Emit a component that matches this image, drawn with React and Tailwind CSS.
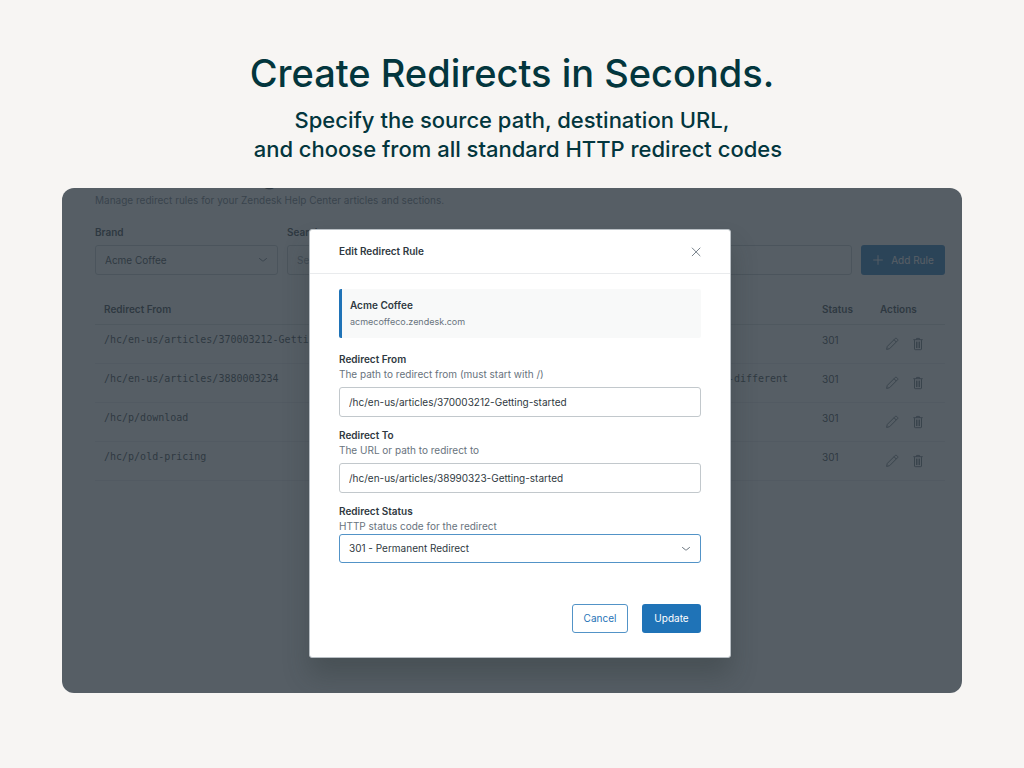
import { useState } from 'react'

const rules = [
  { from: '/hc/en-us/articles/370003212-Getting-started', to: '/hc/en-us/articles/38990323-Getting-started', status: 301 },
  { from: '/hc/en-us/articles/3880003234', to: '/hc/en-us/articles/3880003234-something-very-different', status: 301 },
  { from: '/hc/p/download', to: '/hc/p/downloads', status: 301 },
  { from: '/hc/p/old-pricing', to: '/hc/p/pricing', status: 301 },
]

function ChevronIcon({ className }) {
  return (
    <svg viewBox="0 0 12 12" className={className} fill="none" stroke="currentColor" strokeLinecap="round" aria-hidden="true">
      <path d="M2.5 4.5l2.9 2.3a1 1 0 0 0 1.2 0l2.9-2.3" />
    </svg>
  )
}

function PlusIcon() {
  return (
    <svg viewBox="0 0 12 12" className="size-3" fill="none" stroke="currentColor" strokeWidth="0.9" strokeLinecap="round" aria-hidden="true">
      <path d="M6 1.6v8.8M1.6 6h8.8" />
    </svg>
  )
}

function CloseIcon() {
  return (
    <svg viewBox="0 0 12 12" className="size-3" fill="none" stroke="currentColor" strokeWidth="0.9" strokeLinecap="round" aria-hidden="true">
      <path d="M2.2 2l7.800 7.800M10 2L2.200 9.800" />
    </svg>
  )
}

function PencilIcon() {
  return (
    <svg viewBox="0 0 14 14" className="size-3.5" fill="none" stroke="currentColor" strokeLinejoin="round" aria-hidden="true">
      <path d="M1.6 12.4l.7-3L10.400 1.300a.8.8 0 0 1 1.100 0l1.200 1.200a.8.8 0 0 1 0 1.100L4.600 11.700z" />
      <path d="M9 2.700l2.300 2.300" />
    </svg>
  )
}

function TrashIcon() {
  return (
    <svg viewBox="0 0 14 14" className="size-3.5" fill="none" stroke="currentColor" strokeLinecap="round" aria-hidden="true">
      <path d="M3.500 3.500v8.500a.7.7 0 0 0 .7.7h5.600a.7.7 0 0 0 .7-.7V3.500M2.700 2.700h8.600M5.500 2.500V1.400h3v1.100" />
      <path d="M5.500 5v5.700M7 5v5.700M8.500 5v5.700" />
    </svg>
  )
}

function RulesPage() {
  return (
    <div className="col-start-1 row-start-1 min-w-0 bg-white pr-[17px] pl-[33px] text-[10px] text-[#2f3941]">
      <h2 className="-mt-[27px] text-[24px] leading-[30px] font-semibold">Redirect Manager</h2>
      <p className="mt-[2px] leading-[14px] text-[#68737d]">
        Manage redirect rules for your Zendesk Help Center articles and sections.
      </p>

      <div className="mt-[18px] flex items-end gap-[9px]">
        <div className="w-[183px]">
          <label htmlFor="brand" className="block leading-[14px] font-semibold">Brand</label>
          <div className="relative mt-[6px]">
            <select id="brand" className="block h-[30px] w-full appearance-none rounded-[3px] border border-[#c2c8cc] px-[9px]">
              <option>Acme Coffee</option>
            </select>
            <ChevronIcon className="pointer-events-none absolute top-[9px] right-[9px] size-3 text-[#68737d]" />
          </div>
        </div>
        <div className="flex-1">
          <label htmlFor="search" className="block leading-[14px] font-semibold">Search</label>
          <input
            id="search"
            type="text"
            placeholder="Search redirects"
            className="mt-[6px] block h-[30px] w-full rounded-[3px] border border-[#c2c8cc] px-[9px] placeholder:text-[#87929d]"
          />
        </div>
        <button type="button" className="flex h-[30px] w-[84px] items-center justify-center gap-[7px] rounded-[3px] bg-[#1f73b7] text-white">
          <PlusIcon />
          Add Rule
        </button>
      </div>

      <table className="mt-5 w-full table-fixed text-left">
        <thead>
          <tr className="h-[29px] border-b border-[#d8dcde]">
            <th className="px-[9px] font-semibold">Redirect From</th>
            <th className="px-[9px] font-semibold">Redirect To</th>
            <th className="w-[58px] px-[9px] font-semibold">Status</th>
            <th className="w-[74px] px-[9px] font-semibold">Actions</th>
          </tr>
        </thead>
        <tbody>
          {rules.map((rule) => (
            <tr key={rule.from} className="h-[39px] border-b border-[#e9ebed] align-top">
              <td className="truncate px-[9px] pt-[7px] font-['DejaVu_Sans_Mono',monospace] leading-4">{rule.from}</td>
              <td className="truncate px-[9px] pt-[7px] font-['DejaVu_Sans_Mono',monospace] leading-4">{rule.to}</td>
              <td className="px-[9px] pt-[7px] leading-4">{rule.status}</td>
              <td className="px-[14px] pt-3">
                <div className="flex gap-3 text-[#68737d]">
                  <button type="button" aria-label="Edit rule"><PencilIcon /></button>
                  <button type="button" aria-label="Delete rule"><TrashIcon /></button>
                </div>
              </td>
            </tr>
          ))}
        </tbody>
      </table>
    </div>
  )
}

function Field({ id, label, hint, children }) {
  return (
    <div>
      <label htmlFor={id} className="block leading-[15px] font-semibold">{label}</label>
      <p id={`${id}-hint`} className="leading-[15px] text-[#68737d]">{hint}</p>
      {children}
    </div>
  )
}

function EditRuleModal() {
  const [from, setFrom] = useState('/hc/en-us/articles/370003212-Getting-started')
  const [to, setTo] = useState('/hc/en-us/articles/38990323-Getting-started')
  const [status, setStatus] = useState('301')

  return (
    <div
      role="dialog"
      aria-labelledby="modal-title"
      className="w-full max-w-[422px] rounded-[3px] border border-[#b9bfc4] bg-white text-[10px] text-[#2f3941] shadow-[0_18px_26px_rgba(40,50,50,0.3)]"
    >
      <div className="flex h-11 items-center justify-between border-b border-[#e9ebed] px-[29px]">
        <h2 id="modal-title" className="font-semibold">Edit Redirect Rule</h2>
        <button type="button" aria-label="Close" className="-mr-px text-[#68737d]">
          <CloseIcon />
        </button>
      </div>

      <form className="px-[29px] pt-[15px] pb-6" onSubmit={(e) => e.preventDefault()}>
        <div className="h-[49px] rounded-[2px] border-l-[3px] border-[#1f73b7] bg-[#f8f9f9] px-2 pt-2">
          <p className="leading-4 font-semibold">Acme Coffee</p>
          <p className="text-[9px] leading-[18px] text-[#68737d]">acmecoffeco.zendesk.com</p>
        </div>

        <div className="mt-[14px] flex flex-col gap-[11px]">
          <Field id="from" label="Redirect From" hint="The path to redirect from (must start with /)">
            <input
              id="from"
              type="text"
              aria-describedby="from-hint"
              value={from}
              onChange={(e) => setFrom(e.target.value)}
              className="mt-[5px] block h-[30px] w-full rounded-[3px] border border-[#c2c8cc] px-[9px]"
            />
          </Field>
          <Field id="to" label="Redirect To" hint="The URL or path to redirect to">
            <input
              id="to"
              type="text"
              aria-describedby="to-hint"
              value={to}
              onChange={(e) => setTo(e.target.value)}
              className="mt-[5px] block h-[30px] w-full rounded-[3px] border border-[#c2c8cc] px-[9px]"
            />
          </Field>
          <Field id="status" label="Redirect Status" hint="HTTP status code for the redirect">
            <div className="relative">
              <select
                id="status"
                aria-describedby="status-hint"
                value={status}
                onChange={(e) => setStatus(e.target.value)}
                className="block h-[29px] w-full appearance-none rounded-[3px] border border-[#5293c7] px-[9px]"
              >
                <option value="301">301 - Permanent Redirect</option>
                <option value="302">302 - Found</option>
                <option value="307">307 - Temporary Redirect</option>
              </select>
              <ChevronIcon className="pointer-events-none absolute top-[9px] right-[9px] size-3 text-[#68737d]" />
            </div>
          </Field>
        </div>

        <div className="mt-[41px] flex justify-end gap-[14px]">
          <button type="button" className="h-[29px] w-14 rounded-[3px] border border-[#5293c7] text-[#1f73b7]">Cancel</button>
          <button type="submit" className="h-[29px] w-[59px] rounded-[3px] bg-[#1f73b7] text-white">Update</button>
        </div>
      </form>
    </div>
  )
}

export default function App() {
  return (
    <main className="min-h-screen bg-[#f7f5f3] px-[62px] pt-[49px] pb-[75px] font-[Inter,sans-serif]">
      <header className="text-center font-medium text-[#03363d]">
        <h1 className="text-[38px] leading-[48px]">Create Redirects in Seconds.</h1>
        <p className="mt-[9px] text-[22px] leading-[29px]">
          Specify the source path, destination URL,
          <br />
          &nbsp; and choose from all standard HTTP redirect codes
        </p>
      </header>

      <section className="mt-6 grid grid-cols-1 overflow-hidden rounded-xl">
        <RulesPage />
        <div className="relative col-start-1 row-start-1 flex justify-center bg-[#2f3941]/81 pt-[41px] pb-[35px] pl-4">
          <EditRuleModal />
        </div>
      </section>
    </main>
  )
}
